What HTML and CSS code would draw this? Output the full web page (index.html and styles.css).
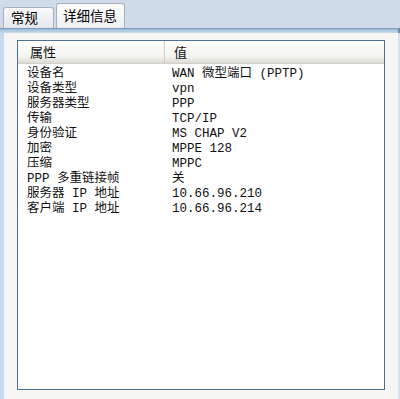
FILE: index.html
```
<!DOCTYPE html>
<html lang="zh-CN">
<head>
    <meta charset="UTF-8">
    <title>连接属性 - 详细信息</title>
    <link rel="stylesheet" href="styles.css">
</head>
<body>
    <div class="tabbar">
        <div class="tab">常规</div>
        <div class="tab active">详细信息</div>
    </div>
    <div class="band"></div>

    <div class="panel">
        <div class="listbox">
            <div class="list-header">
                <div class="col-name">属性</div>
                <div class="col-value">值</div>
            </div>
            <div class="rows">
                <div class="row"><span class="name">设备名</span><span class="value">WAN 微型端口 (PPTP)</span></div>
                <div class="row"><span class="name">设备类型</span><span class="value">vpn</span></div>
                <div class="row"><span class="name">服务器类型</span><span class="value">PPP</span></div>
                <div class="row"><span class="name">传输</span><span class="value">TCP/IP</span></div>
                <div class="row"><span class="name">身份验证</span><span class="value">MS CHAP V2</span></div>
                <div class="row"><span class="name">加密</span><span class="value">MPPE 128</span></div>
                <div class="row"><span class="name">压缩</span><span class="value">MPPC</span></div>
                <div class="row"><span class="name">PPP 多重链接帧</span><span class="value">关</span></div>
                <div class="row"><span class="name">服务器 IP 地址</span><span class="value">10.66.96.210</span></div>
                <div class="row"><span class="name">客户端 IP 地址</span><span class="value">10.66.96.214</span></div>
            </div>
        </div>
    </div>
</body>
</html>
```

FILE: styles.css
```
* {
    margin: 0;
    padding: 0;
    box-sizing: border-box;
}

body {
    width: 400px;
    height: 399px;
    overflow: hidden;
    font-family: "Liberation Mono", "Noto Sans CJK SC", monospace;
    font-size: 12.5px;
    color: #111;
    background-color: #f6f6f4;
}

.tabbar {
    height: 28px;
    display: flex;
    align-items: flex-end;
    padding-left: 3px;
    background-color: #cfdbe8;
}

.tab {
    height: 21px;
    width: 51px;
    padding-left: 7px;
    font-family: "Noto Sans CJK SC", sans-serif;
    font-size: 13.5px;
    line-height: 19px;
    color: #000;
    border: 1px solid #a7b1bd;
    border-bottom: none;
    border-radius: 3px 3px 0 0;
    background: linear-gradient(#fbfbfb, #e3e7ed);
}

.tab.active {
    height: 25px;
    width: 69px;
    margin-left: 2px;
    padding-left: 6px;
    line-height: 22px;
    background: linear-gradient(#fdfdfd, #eef0f2);
}

.band {
    height: 5px;
    border-top: 1px solid #7f9bbd;
    background: linear-gradient(#9fb9d6, #c9daec);
    border-right: 2px solid #6f8aa8;
}

.panel {
    height: 366px;
    padding: 7px 13px 9px 13px;
    border-left: 4px solid #c7d9ee;
    border-right: 2px solid #d8e2ec;
}

.listbox {
    height: 100%;
    background-color: #fff;
    border: 1px solid #4f6e95;
}

.list-header {
    height: 23px;
    display: flex;
    font-family: "Noto Sans CJK SC", sans-serif;
    font-size: 13px;
    line-height: 22px;
    background: linear-gradient(#ffffff, #f3f3ef 70%, #dcdbd5);
    border-bottom: 1px solid #d2d0c8;
}

.col-name {
    width: 147px;
    padding-left: 12px;
    border-right: 1px solid #d0cec6;
}

.col-value {
    padding-left: 9px;
}

.rows {
    padding-top: 3px;
}

.row {
    display: flex;
    height: 15px;
    line-height: 15px;
}

.name {
    width: 154px;
    padding-left: 9px;
}
```
